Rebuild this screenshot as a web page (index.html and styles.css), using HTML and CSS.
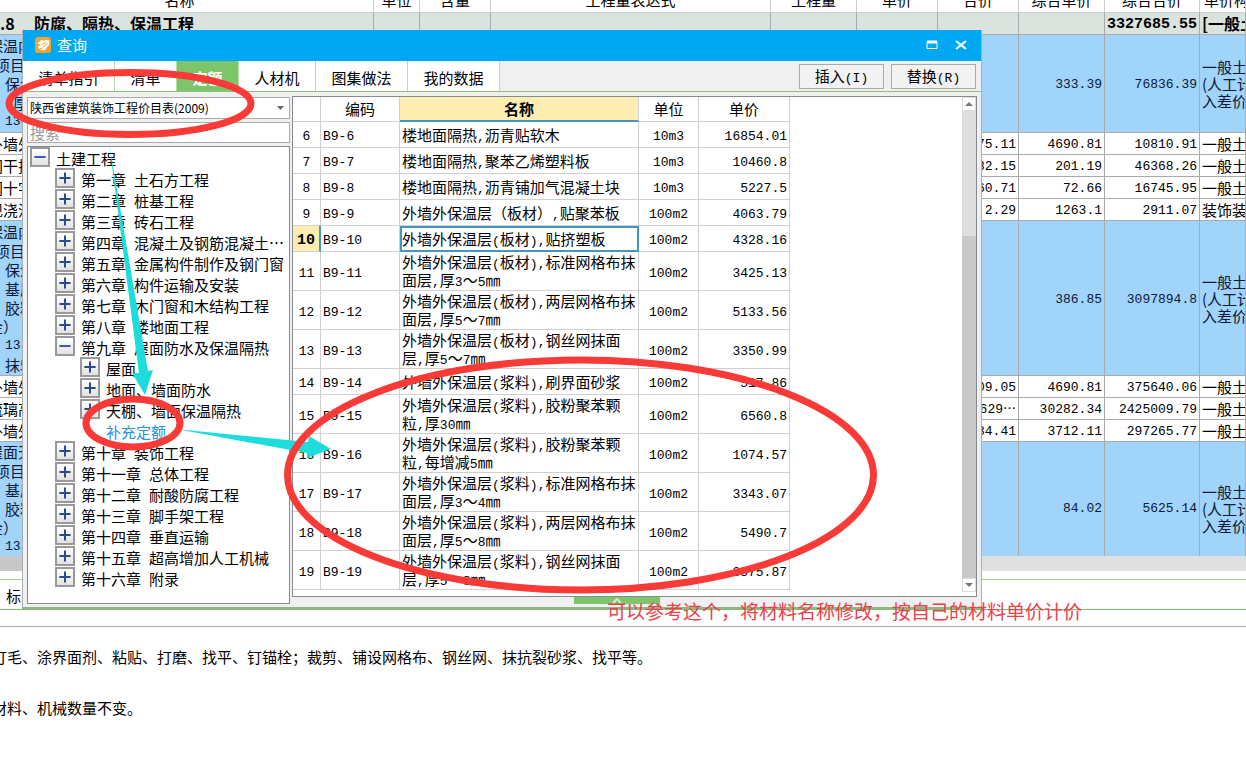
FILE: index.html
```
<!DOCTYPE html>
<html lang="zh-CN">
<head>
<meta charset="utf-8">
<title>查询</title>
<link rel="stylesheet" href="styles.css">
</head>
<body>
<svg class="defs" aria-hidden="true">
  <symbol id="plus" viewBox="0 0 20 20"><path d="M3 10H17M10 3V17" stroke="#2c4a8c" stroke-width="2.500"/></symbol>
  <symbol id="minus" viewBox="0 0 20 20"><path d="M3 10H17" stroke="#3c5cb0" stroke-width="2.500"/></symbol>
</svg>
<main class="page">
  <table class="sheet">
    <colgroup><col class="w-name"><col class="w-unit"><col class="w-qty"><col class="w-expr"><col class="w-amount"><col class="w-price"><col class="w-price"><col class="w-amount"><col class="w-total"><col></colgroup>
    <thead><tr><th class="first">名称</th><th>单位</th><th>含量</th><th>工程量表达式</th><th>工程量</th><th>单价</th><th>合价</th><th>综合单价</th><th>综合合价</th><th class="left">单价构成</th></tr></thead>
    <tbody>
      <tr class="sum"><td><span class="code">.8</span>防腐、隔热、保温工程</td><td></td><td></td><td></td><td></td><td></td><td></td><td></td><td class="num">3327685.55</td><td>[一般土建</td></tr>
      <tr class="group g5"><td><p>保温内</p><p class="mid">项目特</p><p class="sub">保温</p><p class="sub in">厚度</p><p class="sub lat">13J</p></td><td></td><td></td><td></td><td></td><td></td><td></td><td class="num">333.39</td><td class="num">76836.39</td><td class="kind">一般土建<br>(人工计<br>入差价)</td></tr>
      <tr><td><p>外墙外</p></td><td></td><td></td><td></td><td></td><td></td><td class="num">75.11</td><td class="num">4690.81</td><td class="num">10810.91</td><td>一般土建</td></tr>
      <tr><td><p>间干挂</p></td><td></td><td></td><td></td><td></td><td></td><td class="num">82.15</td><td class="num">201.19</td><td class="num">46368.26</td><td>一般土建</td></tr>
      <tr><td><p>间十字</p></td><td></td><td></td><td></td><td></td><td></td><td class="num">60.71</td><td class="num">72.66</td><td class="num">16745.95</td><td>一般土建</td></tr>
      <tr><td><p>现浇混</p></td><td></td><td></td><td></td><td></td><td></td><td class="num">2.29</td><td class="num">1263.1</td><td class="num">2911.07</td><td>装饰装修</td></tr>
      <tr class="group g8"><td><p>保温内</p><p class="mid">项目特</p><p class="sub">保温</p><p class="sub">基层</p><p class="sub">胶粘</p><p>金）</p><p class="sub lat">13J</p><p class="sub">抹5</p></td><td></td><td></td><td></td><td></td><td></td><td></td><td class="num">386.85</td><td class="num">3097894.8</td><td class="kind">一般土建<br>(人工计<br>入差价)</td></tr>
      <tr><td><p>外墙外</p></td><td></td><td></td><td></td><td></td><td></td><td class="num">09.05</td><td class="num">4690.81</td><td class="num">375640.06</td><td>一般土建</td></tr>
      <tr><td><p>琉璃高</p></td><td></td><td></td><td></td><td></td><td></td><td class="num">629<span class="dots">⋯</span></td><td class="num">30282.34</td><td class="num">2425009.79</td><td>一般土建</td></tr>
      <tr><td><p>外墙外</p></td><td></td><td></td><td></td><td></td><td></td><td class="num">34.41</td><td class="num">3712.11</td><td class="num">297265.77</td><td>一般土建</td></tr>
      <tr class="group g6"><td><p>屋面天</p><p class="mid">项目特</p><p class="sub">基层</p><p class="sub">胶粘</p><p>金）</p><p class="sub lat">13J</p></td><td></td><td></td><td></td><td></td><td></td><td></td><td class="num">84.02</td><td class="num">5625.14</td><td class="kind">一般土建<br>(人工计<br>入差价)</td></tr>
    </tbody>
  </table>
  <div class="hscroll"><div class="hthumb"></div></div>
  <div class="subtabs">标</div>
  <div class="strip"></div>
  <section class="notes">
    <p>打毛、涂界面剂、粘贴、打磨、找平、钉锚栓；裁剪、铺设网格布、钢丝网、抹抗裂砂浆、找平等。</p>
    <p>材料、机械数量不变。</p>
  </section>

  <section class="dialog" aria-label="查询">
    <header class="title">
      <svg class="logo" viewBox="0 0 16 16"><rect width="16" height="16" rx="3" fill="#f3a22c"/><path d="M2 6.500L7 2.500L8.500 4L6 6.500L10 3L14.500 3.500L14 8L9.500 13.500L5.500 13L8 10L4 12L3 9.500L6 7.500Z" fill="#fff"/><path d="M7 8L11 5M8.500 10L12.500 6" fill="none" stroke="#f3a22c"/></svg>
      <h1>查询</h1>
      <button class="win" aria-label="最大化"><svg viewBox="0 0 12 12"><path d="M1 2.500H11V9.500H1Z" fill="none" stroke="#fff"/><path d="M1 3H11" stroke="#fff" stroke-width="3"/></svg></button>
      <button class="win" aria-label="关闭"><svg viewBox="0 0 12 12"><path d="M1 2L11 10M11 2L1 10" stroke="#fff" stroke-width="2"/></svg></button>
    </header>
    <nav class="bar">
      <button class="tab t1">清单指引</button><button class="tab t2">清单</button><button class="tab t2 on">定额</button><button class="tab t3">人材机</button><button class="tab t4">图集做法</button><button class="tab t4">我的数据</button>
      <div class="actions"><button class="act">插入<i>(I)</i></button><button class="act">替换<i>(R)</i></button></div>
    </nav>
    <div class="body">
      <aside class="side">
        <div class="pick"><select aria-label="定额库"><option>陕西省建筑装饰工程价目表(2009)</option></select><svg viewBox="0 0 7 4"><path d="M0 0H7L3.500 4Z" fill="#666"/></svg></div>
        <input class="search" type="text" placeholder="搜索" aria-label="搜索">
        <ul class="tree">
          <li><button aria-label="折叠"><svg><use href="#minus"/></svg></button>土建工程</li>
          <li class="l1"><button aria-label="展开"><svg><use href="#plus"/></svg></button>第一章<b></b>土石方工程</li>
          <li class="l1"><button aria-label="展开"><svg><use href="#plus"/></svg></button>第二章<b></b>桩基工程</li>
          <li class="l1"><button aria-label="展开"><svg><use href="#plus"/></svg></button>第三章<b></b>砖石工程</li>
          <li class="l1"><button aria-label="展开"><svg><use href="#plus"/></svg></button>第四章<b></b>混凝土及钢筋混凝土<span class="dots">⋯</span></li>
          <li class="l1"><button aria-label="展开"><svg><use href="#plus"/></svg></button>第五章<b></b>金属构件制作及钢门窗</li>
          <li class="l1"><button aria-label="展开"><svg><use href="#plus"/></svg></button>第六章<b></b>构件运输及安装</li>
          <li class="l1"><button aria-label="展开"><svg><use href="#plus"/></svg></button>第七章<b></b>木门窗和木结构工程</li>
          <li class="l1"><button aria-label="展开"><svg><use href="#plus"/></svg></button>第八章<b></b>楼地面工程</li>
          <li class="l1"><button aria-label="折叠"><svg><use href="#minus"/></svg></button>第九章<b></b>屋面防水及保温隔热</li>
          <li class="l2"><button aria-label="展开"><svg><use href="#plus"/></svg></button>屋面</li>
          <li class="l2"><button aria-label="展开"><svg><use href="#plus"/></svg></button>地面、墙面防水</li>
          <li class="l2"><button aria-label="展开"><svg><use href="#plus"/></svg></button>天棚、墙面保温隔热</li>
          <li class="l3">补充定额</li>
          <li class="l1"><button aria-label="展开"><svg><use href="#plus"/></svg></button>第十章<b></b>装饰工程</li>
          <li class="l1"><button aria-label="展开"><svg><use href="#plus"/></svg></button>第十一章<b></b>总体工程</li>
          <li class="l1"><button aria-label="展开"><svg><use href="#plus"/></svg></button>第十二章<b></b>耐酸防腐工程</li>
          <li class="l1"><button aria-label="展开"><svg><use href="#plus"/></svg></button>第十三章<b></b>脚手架工程</li>
          <li class="l1"><button aria-label="展开"><svg><use href="#plus"/></svg></button>第十四章<b></b>垂直运输</li>
          <li class="l1"><button aria-label="展开"><svg><use href="#plus"/></svg></button>第十五章<b></b>超高增加人工机械</li>
          <li class="l1"><button aria-label="展开"><svg><use href="#plus"/></svg></button>第十六章<b></b>附录</li>
        </ul>
      </aside>
      <div class="main">
        <div class="list">
          <div class="grid">
            <table class="items">
              <colgroup><col class="c-no"><col class="c-code"><col class="c-name"><col class="c-unit"><col class="c-price"></colgroup>
              <thead><tr><th></th><th>编码</th><th class="cur">名称</th><th>单位</th><th>单价</th></tr></thead>
              <tbody>
                <tr><td>6</td><td>B9-6</td><td>楼地面隔热<i>,</i>沥青贴软木</td><td>10m3</td><td>16854.01</td></tr>
                <tr><td>7</td><td>B9-7</td><td>楼地面隔热<i>,</i>聚苯乙烯塑料板</td><td>10m3</td><td>10460.8</td></tr>
                <tr><td>8</td><td>B9-8</td><td>楼地面隔热<i>,</i>沥青铺加气混凝土块</td><td>10m3</td><td>5227.5</td></tr>
                <tr><td>9</td><td>B9-9</td><td>外墙外保温层（板材）<i>,</i>贴聚苯板</td><td>100m2</td><td>4063.79</td></tr>
                <tr class="sel"><td>10</td><td>B9-10</td><td>外墙外保温层<i>(</i>板材<i>),</i>贴挤塑板</td><td>100m2</td><td>4328.16</td></tr>
                <tr class="two"><td>11</td><td>B9-11</td><td>外墙外保温层<i>(</i>板材<i>),</i>标准网格布抹<br>面层<i>,</i>厚<i>3</i>～<i>5</i>㎜</td><td>100m2</td><td>3425.13</td></tr>
                <tr class="two"><td>12</td><td>B9-12</td><td>外墙外保温层<i>(</i>板材<i>),</i>两层网格布抹<br>面层<i>,</i>厚<i>5</i>～<i>7</i>㎜</td><td>100m2</td><td>5133.56</td></tr>
                <tr class="two"><td>13</td><td>B9-13</td><td>外墙外保温层<i>(</i>板材<i>),</i>钢丝网抹面<br>层<i>,</i>厚<i>5</i>～<i>7</i>㎜</td><td>100m2</td><td>3350.99</td></tr>
                <tr><td>14</td><td>B9-14</td><td>外墙外保温层<i>(</i>浆料<i>),</i>刷界面砂浆</td><td>100m2</td><td>517.86</td></tr>
                <tr class="two"><td>15</td><td>B9-15</td><td>外墙外保温层<i>(</i>浆料<i>),</i>胶粉聚苯颗<br>粒<i>,</i>厚<i>30</i>㎜</td><td>100m2</td><td>6560.8</td></tr>
                <tr class="two"><td>16</td><td>B9-16</td><td>外墙外保温层<i>(</i>浆料<i>),</i>胶粉聚苯颗<br>粒<i>,</i>每增减<i>5</i>㎜</td><td>100m2</td><td>1074.57</td></tr>
                <tr class="two"><td>17</td><td>B9-17</td><td>外墙外保温层<i>(</i>浆料<i>),</i>标准网格布抹<br>面层<i>,</i>厚<i>3</i>～<i>4</i>㎜</td><td>100m2</td><td>3343.07</td></tr>
                <tr class="two"><td>18</td><td>B9-18</td><td>外墙外保温层<i>(</i>浆料<i>),</i>两层网格布抹<br>面层<i>,</i>厚<i>5</i>～<i>8</i>㎜</td><td>100m2</td><td>5490.7</td></tr>
                <tr class="two"><td>19</td><td>B9-19</td><td>外墙外保温层<i>(</i>浆料<i>),</i>钢丝网抹面<br>层<i>,</i>厚<i>5</i>～<i>8</i>㎜</td><td>100m2</td><td>3375.87</td></tr>
              </tbody>
            </table>
          </div>
          <div class="vscroll">
            <button class="arrow" aria-label="向上"><svg viewBox="0 0 8 4"><path d="M0 4H8L4 0Z" fill="#777"/></svg></button>
            <div class="before"></div><div class="thumb"></div>
            <button class="arrow" aria-label="向下"><svg viewBox="0 0 8 4"><path d="M0 0H8L4 4Z" fill="#777"/></svg></button>
          </div>
        </div>
        <button class="handle" aria-label="展开详情"><svg viewBox="0 0 10 6"><path d="M1 5L5 1L9 5" fill="none" stroke="#d4efc8" stroke-width="2"/></svg></button>
      </div>
    </div>
  </section>

  <svg class="marks" width="1246" height="765" viewBox="0 0 1246 765">
    <g fill="#1fdcdc"><path d="M109 143L148 371L153 370L145 395L132 373L139 373Z"/><path d="M176 429L308 442L309 436L331 449L307 458L307 453Z"/></g>
    <g fill="none" stroke="#f93a36" stroke-width="7"><ellipse cx="130" cy="103.500" rx="121" ry="31"/><ellipse cx="133" cy="423" rx="47" ry="24"/><ellipse cx="580.500" cy="475" rx="293" ry="115"/></g>
  </svg>
  <p class="remark">可以参考这个，将材料名称修改，按自己的材料单价计价</p>
</main>
</body>
</html>
```
FILE: styles.css
```
* { box-sizing: border-box; }
body { margin: 0; background: #fff; color: #000; font: 15px/19px "Noto Sans CJK SC", sans-serif; }
p, h1, ul { margin: 0; padding: 0; }
button { margin: 0; padding: 0; border: 0; background: none; font: inherit; color: inherit; }
i { font: 13px/1 "Liberation Mono", monospace; }
.defs { display: none; }
.page { position: relative; min-height: 100vh; overflow: hidden; }

/* estimate sheet */
.sheet { width: 100%; margin-top: -12px; table-layout: fixed; border-collapse: separate; border-spacing: 0; }
.w-name { width: 374px; }
.w-unit { width: 46px; }
.w-qty { width: 71px; }
.w-expr { width: 280px; }
.w-amount { width: 86px; }
.w-price { width: 81px; }
.w-total { width: 95px; }
.sheet th, .sheet td { height: 22px; padding: 0 2px; overflow: hidden; white-space: nowrap; line-height: 19px; border-right: 1px solid #aaa; border-bottom: 1px solid #aaa; }
.sheet th { height: 25px; padding: 0 0 2px; font-weight: 400; border-color: #ccc; }
.sheet th.first { padding-right: 14px; }
.sheet th.left { padding-left: 4px; text-align: left; }
.sheet td:first-child { padding: 0; }
.sheet p { margin-left: -12px; }
.sheet p.mid { margin-left: -5px; }
.sheet p.sub { margin-left: 5px; }
.sheet p.in { padding-left: 8px; }
.num, .lat { font-family: "Liberation Mono", monospace; font-size: 13px; text-align: right; }
.sheet .num { padding-top: 2px; }
.lat { text-align: left; }
.sheet .sum td { font-size: 16px; font-weight: 700; background: #dae3de; }
.sheet .sum .num { font-size: 15px; }
.code { display: inline-block; width: 34px; }
.group td { background: #a0d4fb; color: #0c1836; }
.sheet .g5 td { height: 98px; }
.sheet .g8 td { height: 155px; }
.sheet .g6 td { height: 114px; border-bottom: 0; }
.sheet .g6 td:not(:first-child) { padding-top: 18px; }
.sheet td.kind { line-height: 17px; }
.dots { font: 15px/1 "Noto Sans CJK SC", sans-serif; }
.num .dots { font-size: 13px; }
.hscroll { height: 15px; background: #e0e0e0; }
.hthumb { width: 50%; height: 15px; background: #c8c8c8; }
.subtabs { height: 30px; margin-top: 8px; padding: 6px 6px 0; border-top: 1px solid #a4cf8a; }
.strip { height: 18px; border-top: 1px solid #7fc06a; border-bottom: 1px solid #aaa; }
.notes { padding-top: 20px; }
.notes p { margin: 0 0 32px -8px; white-space: nowrap; }

/* query dialog */
.dialog { position: absolute; left: 22px; top: 30px; width: 960px; background: #f0f0f0; border: 1px solid #a8b0b4; border-top: 0; border-bottom: 2px solid #92b388; }
.title { display: flex; align-items: center; gap: 6px; height: 31px; padding: 0 14px 2px 12px; background: #00a8f3; color: #fff; }
.title h1 { flex: 1; font-size: 15px; font-weight: 400; }
.logo { width: 16px; height: 16px; }
.win { width: 12px; height: 12px; margin-left: 11px; }
.win svg { display: block; width: 12px; height: 12px; }
.bar { display: flex; height: 31px; border-bottom: 1px solid #8fc17c; }
.tab { height: 30px; padding-top: 2px; background: #fff; border-right: 1px solid #b9dcab; }
.tab.on { background: #7dc56b; color: #fff; font-weight: 700; }
.t1 { width: 92px; }
.t2 { width: 62px; }
.t3 { width: 77px; }
.t4 { width: 92px; }
.actions { display: flex; gap: 7px; margin-left: auto; padding: 3px 5px 0 0; }
.act { width: 85px; height: 25px; padding-bottom: 2px; border: 1px solid #aaa; background: #f2f2f2; }
.body { display: flex; gap: 2px; padding: 4px 4px 3px 4px; }
.side { display: flex; flex-direction: column; gap: 3px; width: 263px; }
.pick { display: flex; align-items: center; height: 22px; margin-top: 1px; padding-right: 5px; background: #fff; border: 1px solid #aaa; }
.pick select { flex: 1; height: 20px; padding: 0 2px; border: 0; background: none; appearance: none; font: 12px/18px "Noto Sans CJK SC", sans-serif; color: #000; }
.pick svg { width: 7px; height: 4px; }
.search { width: 100%; height: 21px; padding: 0 2px 1px; border: 1px solid #aaa; background: #fff; font: inherit; }
.search::placeholder { color: #999; opacity: 1; }
.tree { flex: 1; padding: 0 2px; list-style: none; background: #fff; border: 1px solid #848b94; overflow: hidden; }
.tree li { display: flex; align-items: center; height: 21px; padding-top: 2px; white-space: nowrap; }
.tree button { width: 20px; height: 20px; margin: 0 6px 3px 0; border: 2px solid #999; background: linear-gradient(#fff, #e2e2e2); }
.tree button svg { display: block; width: 16px; height: 16px; }
.tree b { width: 8px; }
.tree .l1 { padding-left: 25px; }
.tree .l2 { padding-left: 50px; }
.tree .l3 { padding-left: 76px; color: #2492dd; }
.main { flex: 1; display: flex; flex-direction: column; }
.list { display: flex; background: #fff; border: 1px solid #848b94; }
.grid { flex: 1; padding-bottom: 6px; }
.items { width: 497px; table-layout: fixed; border-collapse: separate; border-spacing: 0; }
.c-no { width: 28px; }
.c-code { width: 79px; }
.c-name { width: 239px; }
.c-unit { width: 60px; }
.c-price { width: 91px; }
.items th { height: 25px; padding: 0 0 2px; font-weight: 400; border-right: 1px solid #d0d0d0; border-bottom: 1px solid #d0d0d0; }
.items th.cur { padding: 0; background: #feedb0; font-weight: 700; border-bottom: 2px solid #4298bd; }
.items td { height: 26px; padding: 4px 2px 0; line-height: 19px; white-space: nowrap; border-right: 1px solid #d0d0d0; border-bottom: 1px solid #d0d0d0; font: 13px/19px "Liberation Mono", monospace; }
.items td:nth-child(1), .items td:nth-child(4) { text-align: center; }
.items td:nth-child(3) { padding-top: 0; font: 15px/17px "Noto Sans CJK SC", sans-serif; }
.items td:nth-child(5) { text-align: right; }
.items .two td { height: 39px; }
.items .sel td:nth-child(1) { padding: 4px 0 0; background: #feedb0; font-size: 15px; font-weight: 700; border-right: 2px solid #4298bd; }
.items .sel td:nth-child(3) { padding-left: 0; border: 2px solid #4298bd; }
.vscroll { display: flex; flex-direction: column; width: 14px; margin-bottom: 4px; background: #dedede; }
.arrow { display: flex; align-items: center; justify-content: center; height: 14px; background: #fff; border: 1px solid #ddd; }
.arrow svg { width: 8px; height: 4px; }
.before { flex: 125; }
.thumb { flex: 342; background: #c9c9c9; }
.handle { display: flex; justify-content: center; align-items: center; align-self: center; width: 86px; height: 7px; margin-right: 36px; background: #7dc56b; }
.handle svg { width: 10px; height: 6px; }

/* annotations over the windows */
.marks { position: absolute; left: 0; top: 0; pointer-events: none; }
.remark { position: absolute; left: 607px; top: 599px; font-size: 19px; line-height: 24px; white-space: nowrap; color: #e8424b; }
```
